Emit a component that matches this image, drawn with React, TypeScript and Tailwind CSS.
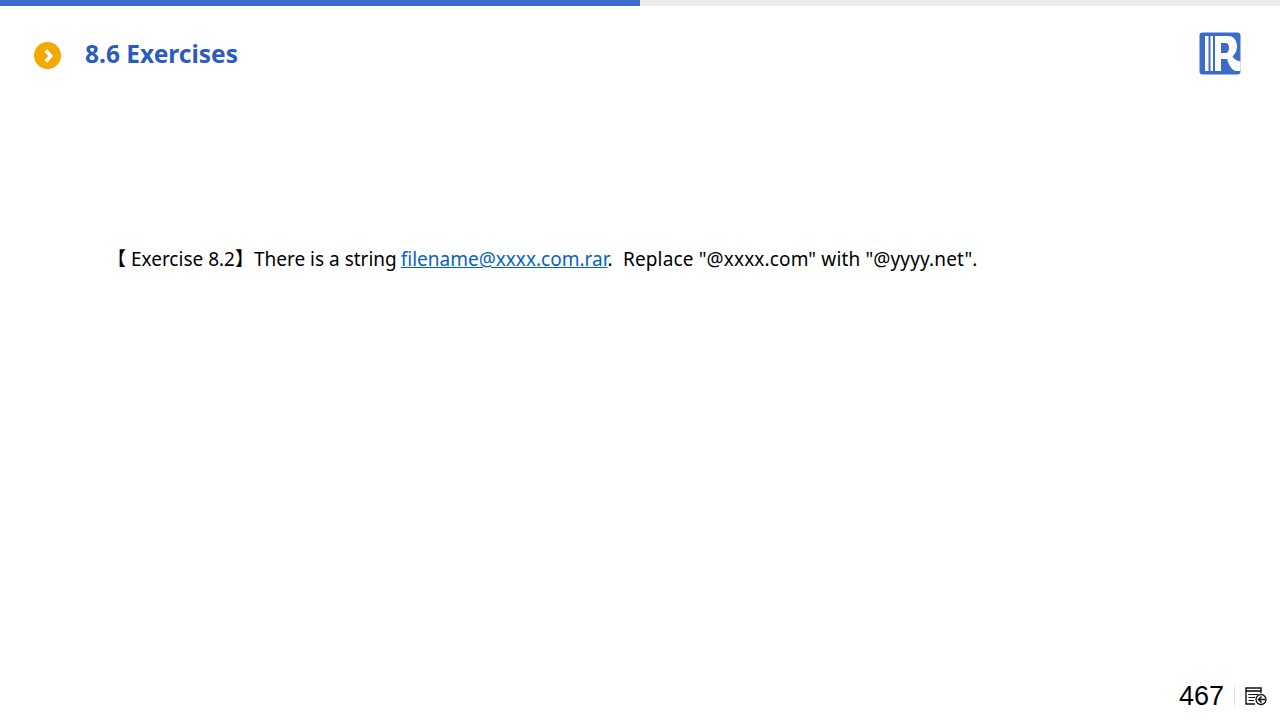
import React from 'react';

const bodyFont = { fontFamily: '"Noto Sans", "Noto Sans CJK SC", sans-serif' };

// Round orange bullet with a white chevron.
const Bullet = (
  <svg viewBox="0 0 27 27" className="w-[27px] h-[27px] shrink-0" aria-hidden="true">
    <circle cx="13.5" cy="13.5" r="13.5" fill="#F2A900" />
    <path d="M11.8 8.5 L16.8 14 L11.8 19.5" fill="none" stroke="#ffffff" strokeWidth="3.6" />
  </svg>
);

// Blue rounded square with two white bars and an R running into the right edge.
const Logo = (
  <svg viewBox="0 0 42 43" className="w-[42px] h-[43px]" aria-hidden="true">
    <rect x="0.5" y="0.5" width="41" height="42" rx="3" fill="#3B6CCB" />
    <rect x="6" y="4" width="3.5" height="35" fill="#ffffff" />
    <rect x="11.5" y="4" width="2.5" height="35" fill="#ffffff" />
    <path
      d="M16 4 H 29 C 35 4 38 9 38 14.5 C 38 19 36 22 33.5 24.5 C 35 27 37.5 29 41.5 29.5 V 39 H 36 C 32 37 29.5 32 28 27 H 22 V 39 H 16 Z M 22 11 V 21 H 27 C 29 21 30 18.5 30 16 C 30 13 29 11 27 11 Z"
      fill="#ffffff"
      fillRule="evenodd"
    />
  </svg>
);

// Small list page with a back arrow in a circle.
const BackIcon = (
  <svg viewBox="0 0 22 19" className="w-[22px] h-[19px]" aria-hidden="true" fill="none" stroke="#111111">
    <path d="M16 6 V 1 H 1 V 17 H 10" strokeWidth="1.4" />
    <path d="M1 4 H 16" strokeWidth="1.6" />
    <path d="M3.5 7.5 H 13 M3.5 10.5 H 10 M3.5 13.5 H 9" strokeWidth="1.2" />
    <circle cx="16" cy="12.5" r="5" strokeWidth="1.3" fill="#ffffff" />
    <path d="M20 12.5 H 13.5 M16.5 9.5 L 13.5 12.5 L 16.5 15.5" strokeWidth="1.5" />
  </svg>
);

export default function App() {
  return (
    <div className="w-[1280px] h-[720px] bg-white flex flex-col overflow-hidden" style={bodyFont}>
      <div className="h-[6px] shrink-0 bg-[#ebebeb]">
        <div className="h-full w-1/2 bg-[#3B6CCB]" />
      </div>

      <header className="flex items-start justify-between pl-[34px] pr-[39px] pt-[26px]">
        <div className="flex items-center gap-[24px] mt-[7px]">
          {Bullet}
          <h1 className="text-[24.5px] leading-[36px] font-bold text-[#2A5CBF] -mt-[3px]">8.6 Exercises</h1>
        </div>
        <div>{Logo}</div>
      </header>

      <main className="flex-1 pl-[107px] pt-[168px]">
        <p className="text-[19px] leading-[32px] text-black whitespace-pre">
          【 Exercise 8.2】There is a string{' '}
          <a className="text-[#0563C1] underline -ml-[1px]">filename@xxxx.com.rar</a>
          <span>{'.  '}</span>
          <span className="ml-[0.5px] tracking-[0.14px]">{'Replace "@xxxx.com" with "@yyyy.net".'}</span>
        </p>
      </main>

      <footer className="flex items-center justify-end h-[40px] pr-[13px] pb-[8px]">
        <span className="text-[27px] leading-[32px] text-black" style={{ fontFamily: '"Liberation Sans", sans-serif' }}>
          467
        </span>
        <span className="w-px h-[20px] bg-[#dfe3ec] ml-[10px] mr-[10px]" />
        {BackIcon}
      </footer>
    </div>
  );
}
